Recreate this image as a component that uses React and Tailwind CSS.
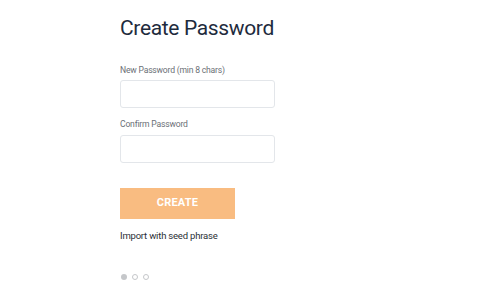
export default function App() {
  return (
    <div className="w-[481px] h-[290px] bg-white" style={{ fontFamily: 'Roboto, "Liberation Sans", sans-serif' }}>
      <div className="pl-[120px] pt-[14px] flex flex-col items-start">
        <h1 className="text-[21px] leading-[28px] tracking-[-0.35px] text-[#1e2b3d] font-normal">Create Password</h1>
        <label className="mt-[22px] text-[8.6px] leading-[12px] tracking-[-0.2px] text-[#6b6f76]">New Password (min 8 chars)</label>
        <input className="mt-[4px] w-[155px] h-[28px] border border-[#e3e6ea] rounded-[3px] outline-none" type="password" />
        <label className="mt-[10px] text-[8.6px] leading-[12px] tracking-[-0.2px] text-[#6b6f76]">Confirm Password</label>
        <input className="mt-[5px] w-[155px] h-[28px] border border-[#e3e6ea] rounded-[3px] outline-none" type="password" />
        <button className="mt-[25px] w-[115px] h-[31px] bg-[#f9bc81] text-white text-[11px] font-bold tracking-[0.2px]">CREATE</button>
        <div className="mt-[10px] text-[9.5px] leading-[14px] tracking-[-0.2px] text-[#2a2f36]">Import with seed phrase</div>
        <div className="mt-[31px] flex gap-[5px] ml-[1px]">
          <span className="w-[6px] h-[6px] rounded-full bg-[#c5c7ca]"></span>
          <span className="w-[6px] h-[6px] rounded-full border border-[#c5c7ca]"></span>
          <span className="w-[6px] h-[6px] rounded-full border border-[#c5c7ca]"></span>
        </div>
      </div>
    </div>
  );
}
